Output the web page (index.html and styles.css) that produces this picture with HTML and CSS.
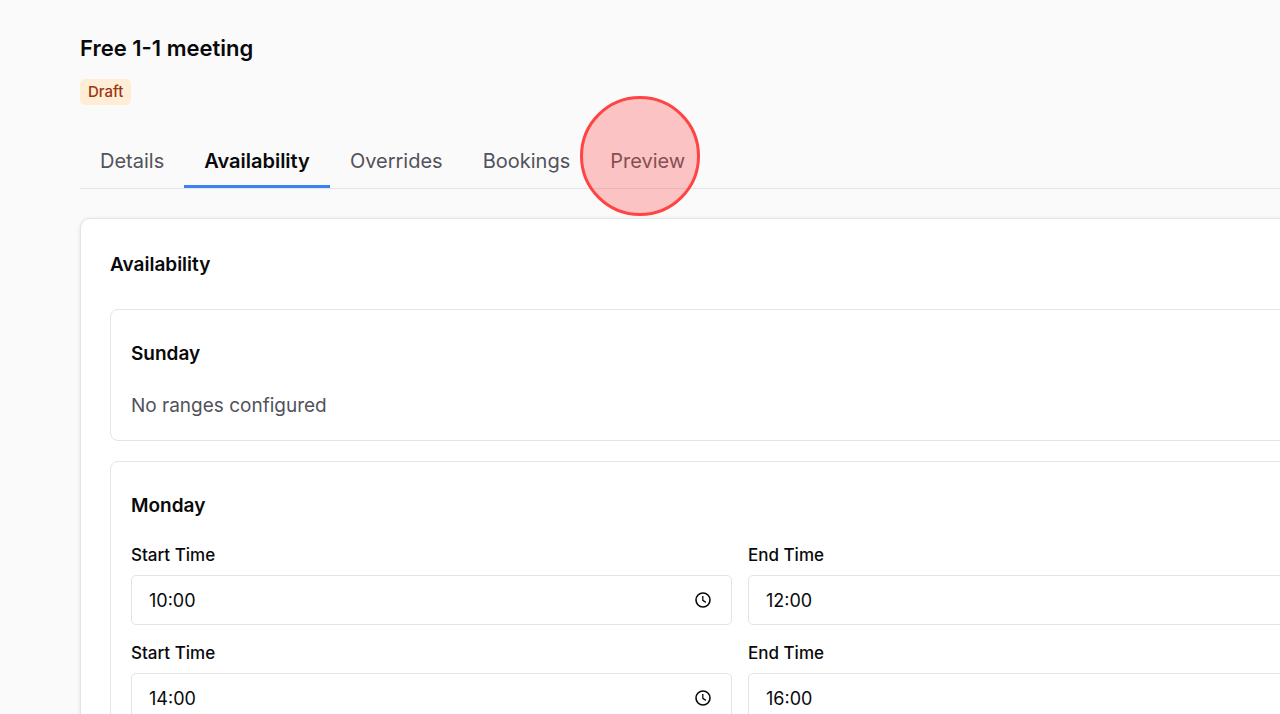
FILE: index.html
```html
<!DOCTYPE html>
<html lang="en">
<head>
  <meta charset="UTF-8" />
  <meta name="viewport" content="width=device-width, initial-scale=1.0"/>
  <title>Free 1-1 meeting</title>
  <link rel="stylesheet" href="styles.css">
</head>
<body>
  <svg class="sprite" aria-hidden="true">
    <symbol id="clock" viewBox="0 0 18 18">
      <circle cx="9" cy="9" r="7" fill="none" stroke="currentColor" stroke-width="1.6"/>
      <path d="M8.8 5v4.4l3.1 2" fill="none" stroke="currentColor" stroke-width="1.3"/>
    </symbol>
  </svg>

  <main class="page">
    <header class="header">
      <h1>Free 1-1 meeting</h1>
      <span class="badge">Draft</span>
    </header>

    <div class="tabs" role="tablist">
      <button class="tab" type="button" role="tab">Details</button>
      <button class="tab active" type="button" role="tab" aria-selected="true">Availability</button>
      <button class="tab" type="button" role="tab">Overrides</button>
      <button class="tab" type="button" role="tab">Bookings</button>
      <button class="tab" type="button" role="tab">Preview</button>
    </div>

    <section class="card">
      <h2>Availability</h2>

      <div class="day">
        <h3>Sunday</h3>
        <p class="empty">No ranges configured</p>
      </div>

      <div class="day">
        <h3>Monday</h3>
        <div class="ranges">
          <div class="field">
            <label for="start1">Start Time</label>
            <div class="time">
              <input type="text" id="start1" value="10:00">
              <svg class="icon"><use href="#clock"/></svg>
            </div>
          </div>
          <div class="field">
            <label for="end1">End Time</label>
            <div class="time">
              <input type="text" id="end1" value="12:00">
              <svg class="icon"><use href="#clock"/></svg>
            </div>
          </div>
          <div class="field">
            <label for="start2">Start Time</label>
            <div class="time">
              <input type="text" id="start2" value="14:00">
              <svg class="icon"><use href="#clock"/></svg>
            </div>
          </div>
          <div class="field">
            <label for="end2">End Time</label>
            <div class="time">
              <input type="text" id="end2" value="16:00">
              <svg class="icon"><use href="#clock"/></svg>
            </div>
          </div>
        </div>
      </div>
    </section>
  </main>

  <!-- click highlight over the Preview tab -->
  <div class="highlight"></div>
</body>
</html>
```

FILE: styles.css
```css
* {
  box-sizing: border-box;
}

html {
  overflow: hidden;
}

body {
  position: relative;
  margin: 0;
  background: #fafafa;
  color: #09090b;
  font-family: Inter, "Liberation Sans", sans-serif;
  font-size: 19px;
}

h1, h2, h3, p {
  margin: 0;
}

.sprite {
  display: none;
}

.page {
  min-width: 1480px;
  padding: 32px 80px;
}

.header {
  display: flex;
  flex-direction: column;
  align-items: flex-start;
  gap: 15px;
}

h1 {
  font-size: 22px;
  font-weight: 600;
  line-height: 32px;
}

.badge {
  padding: 0 8px;
  border-radius: 5px;
  background: #ffedd5;
  color: #9a3412;
  font-size: 15px;
  font-weight: 500;
  line-height: 26px;
}

.tabs {
  display: flex;
  margin-top: 29px;
  border-bottom: 1px solid #e4e4e7;
}

.tab {
  padding: 13px 20px 10px;
  border: none;
  border-bottom: 3px solid transparent;
  background: none;
  color: #52525b;
  font-family: inherit;
  font-size: 20px;
  line-height: 28px;
  cursor: pointer;
}

.tab.active {
  border-bottom-color: #3b82f6;
  color: #09090b;
  font-weight: 600;
}

.card {
  display: flex;
  flex-direction: column;
  gap: 20px;
  margin-top: 29px;
  padding: 31px 29px 29px;
  border: 1px solid #e4e4e7;
  border-radius: 10px;
  background: #fff;
  box-shadow: 0 1px 4px rgba(0, 0, 0, 0.1);
}

h2 {
  margin-bottom: 9px;
  font-size: 19px;
  font-weight: 600;
  line-height: 30px;
}

.day {
  padding: 29px 20px 19px;
  border: 1px solid #e4e4e7;
  border-radius: 8px;
}

h3 {
  font-size: 19px;
  font-weight: 600;
  line-height: 30px;
}

.empty {
  margin-top: 22px;
  color: #52525b;
  line-height: 30px;
}

.ranges {
  display: grid;
  grid-template-columns: 1fr 1fr;
  gap: 16px;
  margin-top: 22px;
}

label {
  display: block;
  margin-bottom: 8px;
  font-size: 17px;
  font-weight: 500;
  line-height: 24px;
}

.time {
  display: flex;
  align-items: center;
  height: 50px;
  padding: 0 19px 0 17px;
  border: 1px solid #e4e4e7;
  border-radius: 5px;
}

.time input {
  flex: 1;
  min-width: 0;
  padding: 0;
  border: none;
  outline: none;
  background: none;
  color: #09090b;
  font-family: inherit;
  font-size: 18px;
}

.icon {
  width: 18px;
  height: 18px;
}

.highlight {
  position: absolute;
  top: 96px;
  left: 580px;
  width: 120px;
  height: 120px;
  border: 3px solid #ff4444;
  border-radius: 50%;
  background: rgba(255, 68, 68, 0.3);
  pointer-events: none;
}
```
